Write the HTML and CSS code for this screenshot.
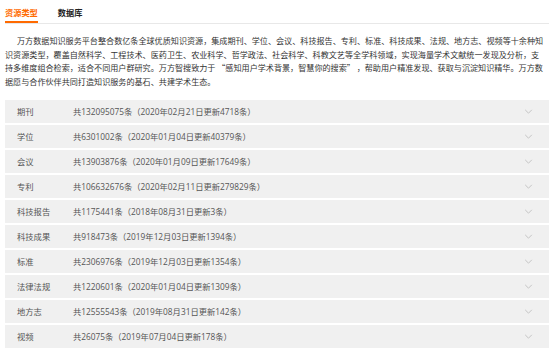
FILE: index.html
```html
<!DOCTYPE html>
<html>
<head>
<meta charset="utf-8">
<link rel="stylesheet" href="styles.css">
</head>
<body>
	<div class="page">
		<div class="tabs">
			<a class="tab active">资源类型</a>
			<a class="tab">数据库</a>
		</div>

		<p class="intro">万方数据知识服务平台整合数亿条全球优质知识资源，集成期刊、学位、会议、科技报告、专利、标准、科技成果、法规、地方志、视频等十余种知识资源类型，覆盖自然科学、工程技术、医药卫生、农业科学、哲学政法、社会科学、科教文艺等全学科领域，实现海量学术文献统一发现及分析，支持多维度组合检索，适合不同用户群研究。万方智搜致力于 “感知用户学术背景，智慧你的搜索” ，帮助用户精准发现、获取与沉淀知识精华。万方数据愿与合作伙伴共同打造知识服务的基石、共建学术生态。</p>

		<ul class="res-list">
			<li class="res-item"><span class="res-name">期刊</span><span class="res-count">共132095075条（2020年02月21日更新4718条）</span><svg class="arrow" viewBox="0 0 10 6"><polyline points="1,1 5,5 9,1"/></svg></li>
			<li class="res-item"><span class="res-name">学位</span><span class="res-count">共6301002条（2020年01月04日更新40379条）</span><svg class="arrow" viewBox="0 0 10 6"><polyline points="1,1 5,5 9,1"/></svg></li>
			<li class="res-item"><span class="res-name">会议</span><span class="res-count">共13903876条（2020年01月09日更新17649条）</span><svg class="arrow" viewBox="0 0 10 6"><polyline points="1,1 5,5 9,1"/></svg></li>
			<li class="res-item"><span class="res-name">专利</span><span class="res-count">共106632676条（2020年02月11日更新279829条）</span><svg class="arrow" viewBox="0 0 10 6"><polyline points="1,1 5,5 9,1"/></svg></li>
			<li class="res-item"><span class="res-name">科技报告</span><span class="res-count">共1175441条（2018年08月31日更新3条）</span><svg class="arrow" viewBox="0 0 10 6"><polyline points="1,1 5,5 9,1"/></svg></li>
			<li class="res-item"><span class="res-name">科技成果</span><span class="res-count">共918473条（2019年12月03日更新1394条）</span><svg class="arrow" viewBox="0 0 10 6"><polyline points="1,1 5,5 9,1"/></svg></li>
			<li class="res-item"><span class="res-name">标准</span><span class="res-count">共2306976条（2019年12月03日更新1354条）</span><svg class="arrow" viewBox="0 0 10 6"><polyline points="1,1 5,5 9,1"/></svg></li>
			<li class="res-item"><span class="res-name">法律法规</span><span class="res-count">共1220601条（2020年01月04日更新1309条）</span><svg class="arrow" viewBox="0 0 10 6"><polyline points="1,1 5,5 9,1"/></svg></li>
			<li class="res-item"><span class="res-name">地方志</span><span class="res-count">共12555543条（2019年08月31日更新142条）</span><svg class="arrow" viewBox="0 0 10 6"><polyline points="1,1 5,5 9,1"/></svg></li>
			<li class="res-item"><span class="res-name">视频</span><span class="res-count">共26075条（2019年07月04日更新178条）</span><svg class="arrow" viewBox="0 0 10 6"><polyline points="1,1 5,5 9,1"/></svg></li>
		</ul>
	</div>
</body>
</html>
```

FILE: styles.css
```css
body {
	margin: 0;
	background: #fff;
	font-family: "Open Sans", "Noto Sans CJK SC", sans-serif;
	color: #333;
}
.page {
	width: 544px;
	padding: 0 5px;
}
.tabs {
	display: flex;
	gap: 20px;
	border-bottom: 1px solid #e8e8e8;
}
.tab {
	padding-top: 3px;
	line-height: 18px;
	border-bottom: 2px solid transparent;
	font-family: "Noto Sans CJK SC", sans-serif;
	font-size: 8.2px;
	font-weight: bold;
	color: #222;
	cursor: pointer;
}
.tab.active {
	color: #ff6a00;
	border-bottom-color: #ff6a00;
}
.intro {
	width: 540px;
	margin: 10px 0 11px;
	text-indent: 12px;
	font-family: "Noto Sans CJK SC", sans-serif;
	font-size: 8.1px;
	line-height: 13.7px;
	color: #333;
}
.res-list {
	display: flex;
	flex-direction: column;
	gap: 2px;
	margin: 0;
	padding: 0;
	list-style: none;
}
.res-item {
	display: flex;
	align-items: center;
	height: 23px;
	padding: 0 16px 0 12px;
	background: #f0f0f0;
}
.res-name {
	width: 56px;
	font-family: "Noto Sans CJK SC", sans-serif;
	font-size: 8.3px;
	color: #555;
}
.res-count {
	flex: 1;
	font-size: 8.3px;
	color: #555;
}
.arrow {
	width: 9px;
	height: 5px;
	fill: none;
	stroke: #c4c4c4;
	stroke-width: 1.2;
}
```
